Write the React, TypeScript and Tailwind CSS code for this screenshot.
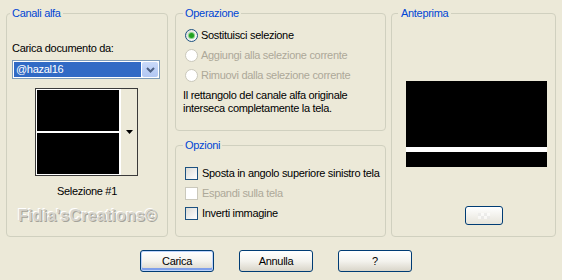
import React from "react";

function Radio({ checked, disabled }: { checked?: boolean; disabled?: boolean }) {
  return (
    <span
      className={
        "flex h-[13px] w-[13px] shrink-0 items-center justify-center rounded-full border " +
        (disabled
          ? "border-[#cac8bb] bg-white"
          : "border-[#1c5180] bg-linear-to-br from-[#dcdcd7] to-white")
      }
    >
      {checked && <span className="h-[5px] w-[5px] rounded-full bg-[#21a121] shadow-[0_0_0_1px_#8bd48b]" />}
    </span>
  );
}

function Check({ disabled }: { disabled?: boolean }) {
  return (
    <span
      className={
        "h-[13px] w-[13px] shrink-0 border " +
        (disabled
          ? "border-[#cac8bb] bg-white"
          : "border-[#1c5180] bg-linear-to-br from-[#dcdcd7] to-white")
      }
    />
  );
}

function XpButton({ label, isDefault }: { label: string; isDefault?: boolean }) {
  return (
    <button
      className={
        "flex h-[22px] w-[74px] items-center justify-center rounded-[3px] border border-[#003c74] bg-linear-to-b from-white via-[#f4f3ee] to-[#d9d5c9] text-[11px] " +
        (isDefault ? "shadow-[inset_0_0_0_1px_#bcd2fa,inset_0_-2px_0_1px_#7f9fea]" : "")
      }
    >
      {label}
    </button>
  );
}

export default function App() {
  return (
    <div className="flex h-[280px] w-[562px] flex-col bg-[#ece9d8] font-['Liberation_Sans',Arial,sans-serif] text-[11px] tracking-[-0.3px] text-black">
      <div className="flex pl-[6px] pt-[6px]">
        {/* Canali alfa */}
        <fieldset className="h-[231px] w-[162px] rounded-[4px] border border-[#d0d0bf]">
          <legend className="ml-[3px] px-[2px] leading-[14px] text-[#0046d5]">Canali alfa</legend>
          <div className="flex flex-col pt-[21px]">
            <div className="pl-[5px] leading-[14px]">Carica documento da:</div>
            <div className="ml-[5px] mt-[5px] flex h-[19px] w-[148px] border border-[#7f9db9] bg-white">
              <div className="m-px flex flex-1 items-center bg-[#316ac5] pl-[2px] text-white">@hazal16</div>
              <div className="my-px mr-px flex w-[16px] items-center justify-center rounded-[2px] bg-linear-to-b from-[#c9daf9] to-[#b2c7f3]">
                <svg width="9" height="6" viewBox="0 0 9 6">
                  <path d="M1 1 L4.5 4.5 L8 1" fill="none" stroke="#4d6185" strokeWidth="2" />
                </svg>
              </div>
            </div>
            <div className="ml-[28px] mt-[9px] flex h-[88px] w-[103px] border border-[#3a3a3a]">
              <div className="flex flex-1 flex-col border border-white bg-black">
                <div className="h-[41px] bg-black" />
                <div className="h-[2px] bg-white" />
                <div className="flex-1 bg-black" />
              </div>
              <div className="flex w-[17px] items-center justify-center border-l border-white bg-[#ece9d8]">
                <svg width="7" height="4" viewBox="0 0 7 4">
                  <path d="M0 0 H7 L3.5 4 Z" fill="#000" />
                </svg>
              </div>
            </div>
            <div className="mt-[8px] text-center leading-[14px]">Selezione #1</div>
            <div className="mt-[9px] pl-[11px] text-[16px] font-bold leading-[18px] tracking-[0.2px] text-[#d6d4cc] [text-shadow:1px_1px_0_#a5a39a,-1px_-1px_0_#ffffff]">
              Fidia'sCreations©
            </div>
          </div>
        </fieldset>

        <div className="ml-[7px] flex w-[211px] flex-col">
          {/* Operazione */}
          <fieldset className="h-[125px] rounded-[4px] border border-[#d0d0bf]">
            <legend className="ml-[7px] px-[2px] leading-[14px] text-[#0046d5]">Operazione</legend>
            <div className="flex flex-col pt-[5px]">
              <div className="flex h-[20px] items-center gap-[3px] pl-[9px]">
                <Radio checked />
                <span>Sostituisci selezione</span>
              </div>
              <div className="flex h-[20px] items-center gap-[3px] pl-[9px] text-[#aca899]">
                <Radio disabled />
                <span>Aggiungi alla selezione corrente</span>
              </div>
              <div className="flex h-[20px] items-center gap-[3px] pl-[9px] text-[#aca899]">
                <Radio disabled />
                <span>Rimuovi dalla selezione corrente</span>
              </div>
              <div className="mt-[4px] pl-[7px] leading-[13px]">
                Il rettangolo del canale alfa originale
                <br />
                interseca completamente la tela.
              </div>
            </div>
          </fieldset>

          {/* Opzioni */}
          <fieldset className="mt-[7px] h-[99px] rounded-[4px] border border-[#d0d0bf]">
            <legend className="ml-[7px] px-[2px] leading-[14px] text-[#0046d5]">Opzioni</legend>
            <div className="flex flex-col pt-[11px]">
              <div className="flex h-[20px] items-center gap-[4px] pl-[9px]">
                <Check />
                <span>Sposta in angolo superiore sinistro tela</span>
              </div>
              <div className="flex h-[20px] items-center gap-[4px] pl-[9px] text-[#aca899]">
                <Check disabled />
                <span>Espandi sulla tela</span>
              </div>
              <div className="flex h-[20px] items-center gap-[4px] pl-[9px]">
                <Check />
                <span>Inverti immagine</span>
              </div>
            </div>
          </fieldset>
        </div>

        {/* Anteprima */}
        <fieldset className="ml-[5px] h-[231px] w-[165px] rounded-[4px] border border-[#d0d0bf]">
          <legend className="ml-[6px] px-[3px] leading-[14px] text-[#0046d5]">Anteprima</legend>
          <div className="flex flex-col pt-[61px]">
            <div className="ml-[14px] flex h-[86px] w-[141px] flex-col">
              <div className="h-[66px] bg-black" />
              <div className="h-[5px] bg-white" />
              <div className="flex-1 bg-black" />
            </div>
            <div className="ml-[73px] mt-[39px] flex h-[19px] w-[38px] items-center justify-center rounded-[3px] border border-[#003c74] bg-linear-to-b from-white to-[#e6e4da]">
              <div className="grid grid-cols-4 opacity-60">
                <span className="h-[3px] w-[3px] bg-[#e8e8e8]" />
                <span className="h-[3px] w-[3px] bg-white" />
                <span className="h-[3px] w-[3px] bg-[#e8e8e8]" />
                <span className="h-[3px] w-[3px] bg-white" />
                <span className="h-[3px] w-[3px] bg-white" />
                <span className="h-[3px] w-[3px] bg-[#e8e8e8]" />
                <span className="h-[3px] w-[3px] bg-white" />
                <span className="h-[3px] w-[3px] bg-[#e8e8e8]" />
              </div>
            </div>
          </div>
        </fieldset>
      </div>

      <div className="ml-[140px] mt-[13px] flex gap-[25px]">
        <XpButton label="Carica" isDefault />
        <XpButton label="Annulla" />
        <XpButton label="?" />
      </div>
    </div>
  );
}
